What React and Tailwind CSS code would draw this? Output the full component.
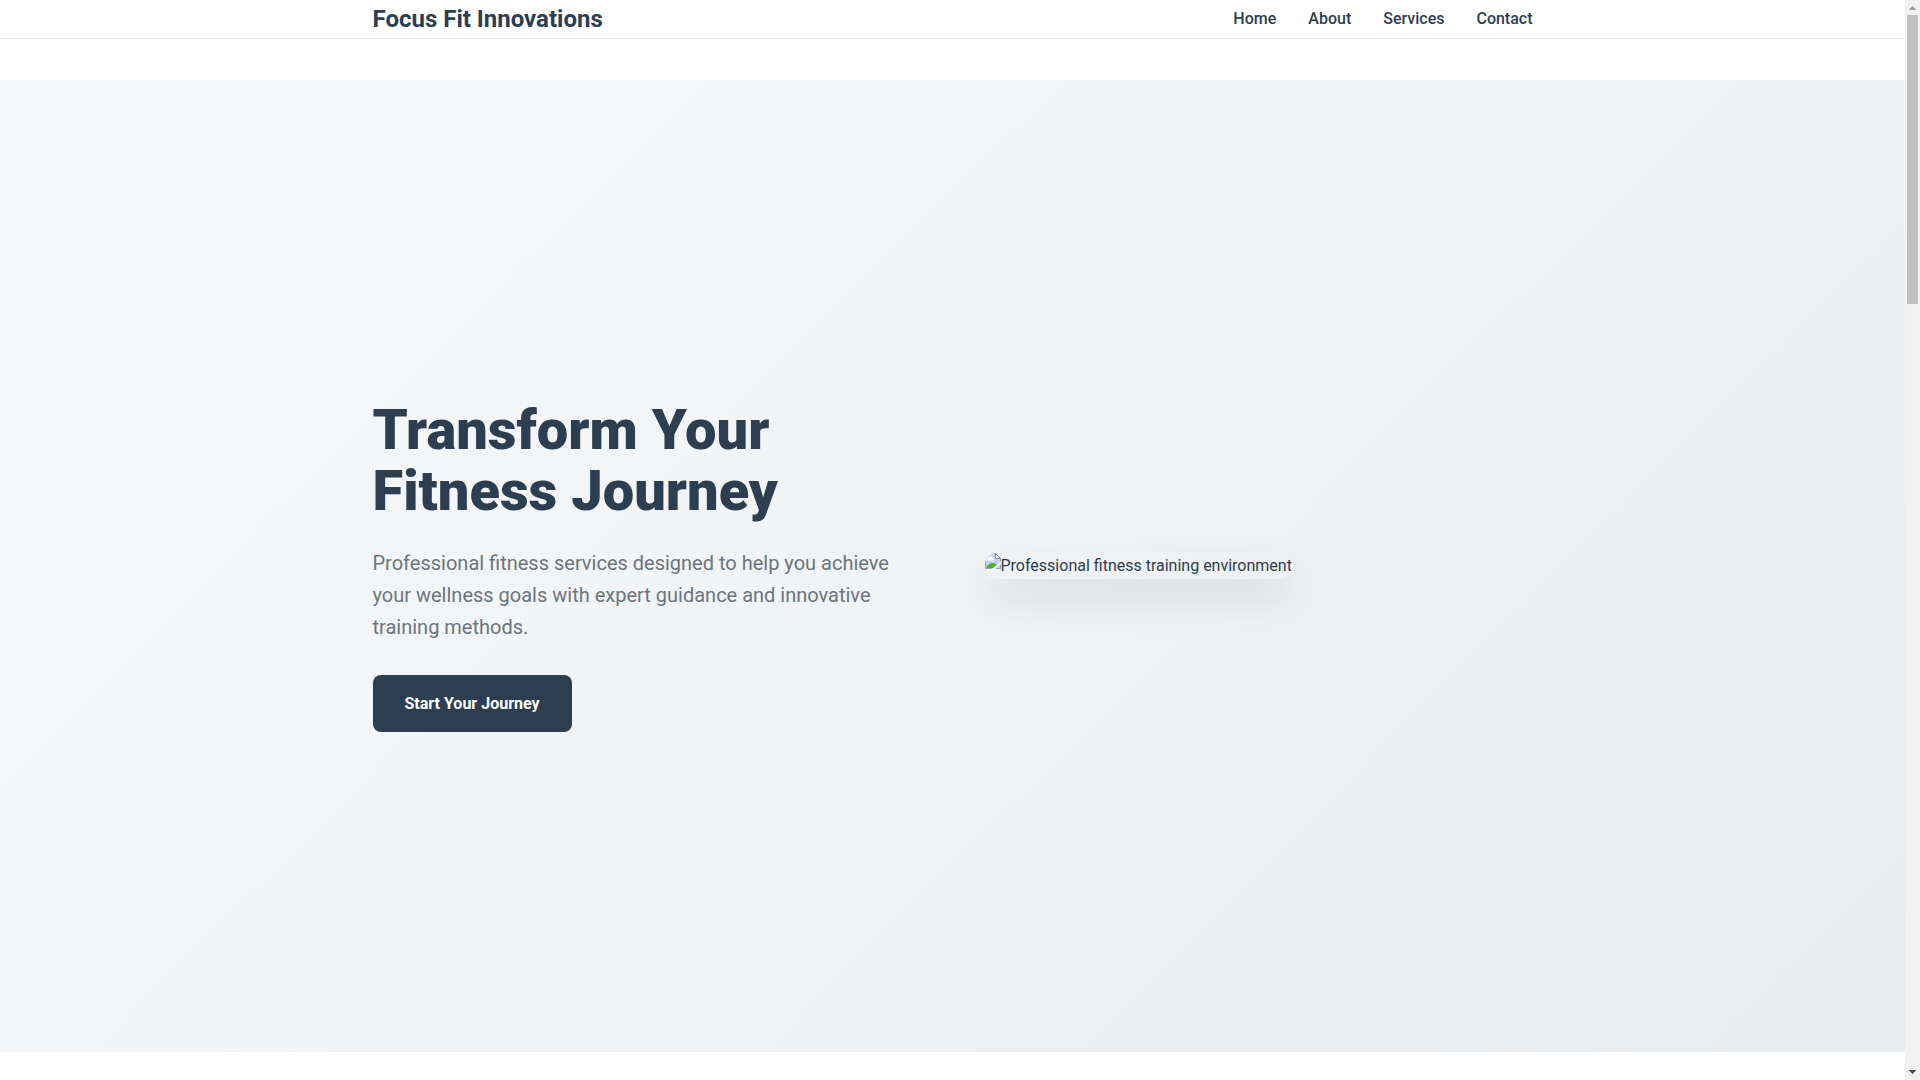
import React from 'react';

const navLinks = [
  { label: 'Home', href: '#home' },
  { label: 'About', href: '#about' },
  { label: 'Services', href: '#services' },
  { label: 'Contact', href: '#contact' },
];

function Header() {
  return (
    <header className="bg-white border-b border-[#eeeeee]">
      <div className="max-w-[1200px] mx-auto px-5 flex items-center justify-between">
        <a href="#home" className="text-2xl leading-[38px] font-bold">
          Focus Fit Innovations
        </a>
        <nav>
          <ul className="flex gap-8">
            {navLinks.map((link) => (
              <li key={link.label}>
                <a href={link.href} className="font-medium">
                  {link.label}
                </a>
              </li>
            ))}
          </ul>
        </nav>
      </div>
    </header>
  );
}

function BrokenImageIcon() {
  return (
    <svg width="16" height="16" viewBox="0 0 16 16" className="shrink-0" aria-hidden="true">
      <path d="M0 0h11l5 5v11H0z" fill="#c1d4f6" />
      <path d="M2 6.500a2 2 0 0 1 2-2 2.500 2.500 0 0 1 4.500 1 1.500 1.500 0 0 1 0 2H2z" fill="#fff" />
      <path d="M1 15c1-3 4-5 7-5 2 0 3.500 1 4 2l-4 3z" fill="#4fae33" />
      <path d="M16 8v3l-6 5H7z" fill="#fff" />
      <path d="M.5.5h10l5 5v3M.5.500v15h6M11 15.500h4.500V12" fill="none" stroke="#a3a3a3" />
      <path d="M10.500.5v5h5z" fill="#fff" stroke="#8f8f8f" />
    </svg>
  );
}

function Hero() {
  return (
    <section
      id="home"
      className="mt-[41px] min-h-[90vh] flex items-center bg-[linear-gradient(135deg,#f8f9fa_0%,#e9ecef_100%)]"
    >
      <div className="w-full max-w-[1200px] mx-auto px-5 grid grid-cols-2 gap-16 items-center">
        <div>
          <h1 className="text-[56px] leading-[61px] font-black mb-[25px]">
            Transform Your Fitness Journey
          </h1>
          <p className="text-xl leading-8 text-[#6c757d] mb-8">
            Professional fitness services designed to help you achieve your wellness goals with
            expert guidance and innovative training methods.
          </p>
          <a
            href="#contact"
            className="inline-block bg-[#2c3e50] text-white font-bold leading-[25px] px-8 py-4 rounded-lg"
          >
            Start Your Journey
          </a>
        </div>
        <div className="flex">
          <div
            role="img"
            aria-label="Professional fitness training environment"
            className="flex items-start overflow-hidden rounded-xl shadow-[0_20px_40px_rgba(0,0,0,0.1)]"
          >
            <BrokenImageIcon />
            <span className="leading-[26px]">Professional fitness training environment</span>
          </div>
        </div>
      </div>
    </section>
  );
}

function ScrollBar() {
  return (
    <div className="w-[15px] shrink-0 bg-[#f1f1f1] flex flex-col items-center" aria-hidden="true">
      <svg width="15" height="15" viewBox="0 0 15 15" shapeRendering="crispEdges">
        <path d="M7 6h1v1h1v1h1v1h1v1H4V9h1V8h1V7h1z" fill="#a3a3a3" />
      </svg>
      <div className="flex-1 w-[11px]">
        <div className="h-[27.5%] bg-[#c1c1c1]" />
      </div>
      <svg width="15" height="15" viewBox="0 0 15 15" shapeRendering="crispEdges">
        <path d="M4 5h7v1h-1v1H9v1H8v1H7V8H6V7H5V6H4z" fill="#505050" />
      </svg>
    </div>
  );
}

export default function App() {
  return (
    <div className="h-screen flex overflow-hidden bg-white text-[#2c3e50] font-['Roboto',sans-serif]">
      <main className="flex-1 min-w-0">
        <Header />
        <Hero />
      </main>
      <ScrollBar />
    </div>
  );
}
